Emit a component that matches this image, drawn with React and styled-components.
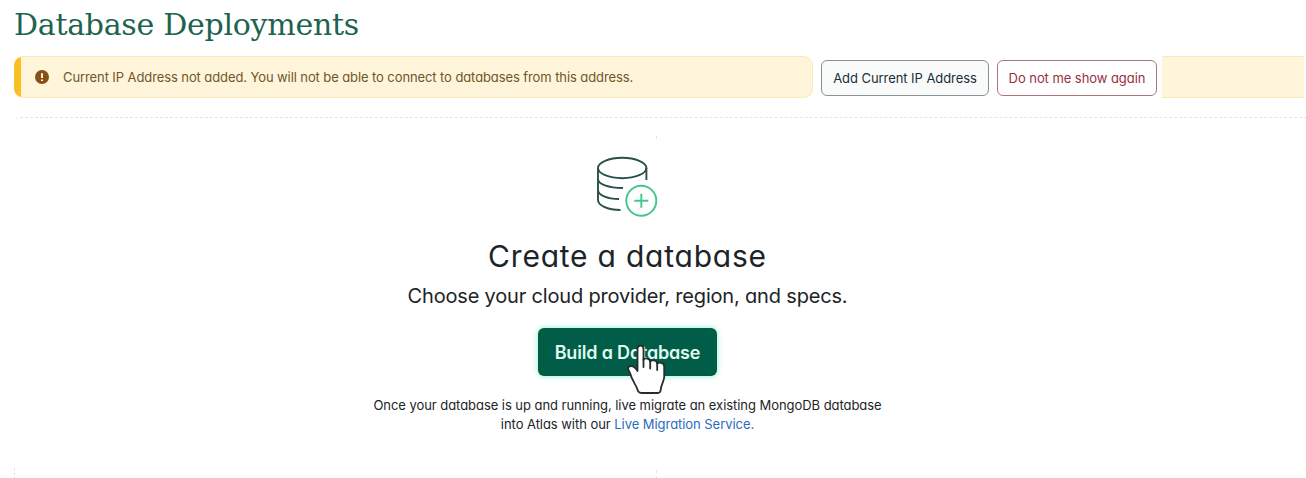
import React from "react";
import styled, { createGlobalStyle } from "styled-components";

const GlobalStyle = createGlobalStyle`
  body {
    margin: 0;
    background: #fff;
    overflow: hidden;
    font-family: Inter, "Liberation Sans", sans-serif;
    font-feature-settings: "cv11";
  }
`;

const Page = styled.main`
  display: flex;
  flex-direction: column;
  width: 1292px;
  height: 478px;
  padding-left: 14px;
  overflow: hidden;
`;

const Title = styled.h1`
  margin: 0;
  height: 56px;
  font: 400 30px/49px "DejaVu Serif", serif;
  letter-spacing: -0.27px;
  color: #1d6350;
  white-space: nowrap;
`;

const BannerRow = styled.div`
  display: flex;
  align-items: center;
  gap: 8px;
  height: 42px;
  padding-right: 2px;
`;

const Banner = styled.div`
  box-sizing: border-box;
  display: flex;
  align-items: center;
  width: 799px;
  height: 42px;
  padding-left: 20px;
  gap: 13px;
  border: 1px solid #faeab9;
  border-left: 0;
  border-radius: 9px;
  background: linear-gradient(to right, #fabf22 7px, #fef5da 7px);
  color: #71562a;
  font-size: 13px;
  letter-spacing: -0.095px;
  white-space: nowrap;
`;

const BannerTail = styled.div`
  box-sizing: border-box;
  flex: 1;
  height: 42px;
  margin-left: -3px;
  border: solid #faeab9;
  border-width: 1px 0;
  background: #fef5da;
`;

const OutlineButton = styled.button`
  box-sizing: border-box;
  width: ${p => p.$width}px;
  height: 36px;
  margin: 2px 0 0;
  padding: 0;
  border: 1px solid ${p => p.$border};
  border-radius: 6px;
  background: ${p => p.$background};
  color: ${p => p.$color};
  font: inherit;
  font-size: 13px;
  font-feature-settings: inherit;
  letter-spacing: -0.06px;
  white-space: nowrap;
`;

const Card = styled.section`
  box-sizing: border-box;
  display: flex;
  flex-direction: column;
  align-items: center;
  position: relative;
  flex: 1;
  margin-top: 19px;
  padding: 36px 65px 0 0;
  border-top: 1px dashed #e3e5e4;
  border-top-left-radius: 6px;
  color: #1c2427;
  text-align: center;
  white-space: nowrap;
`;

const GuideLine = styled.i`
  position: absolute;
  left: ${p => p.$left}px;
  top: ${p => p.$top}px;
  height: ${p => p.$height}px;
  border-left: 1px dashed #e3e5e4;
`;

const DatabaseIcon = styled.svg`
  display: block;
  width: 66px;
  height: 66px;
  margin-right: 1px;
  fill: none;
  stroke-width: 1.9;
`;

const Heading = styled.h2`
  margin: 17px 0 0;
  font-size: 30px;
  font-weight: 400;
  line-height: 38px;
  letter-spacing: 0.78px;
`;

const Subheading = styled.p`
  margin: 7px 0 0;
  font-size: 20px;
  line-height: 28px;
  letter-spacing: -0.18px;
`;

const PrimaryButton = styled.button`
  width: 179px;
  height: 48px;
  margin-top: 18px;
  padding: 0;
  border: 0;
  border-radius: 6px;
  background: #025d48;
  box-shadow: 0 0 5px 1px #a9f3d6;
  color: #dffaee;
  font: inherit;
  font-size: 18px;
  font-weight: 600;
  font-feature-settings: inherit;
  letter-spacing: -0.18px;
`;

const Note = styled.p`
  margin: 20px 0 0;
  font-size: 13px;
  line-height: 19px;
  letter-spacing: -0.05px;
`;

const Link = styled.a`
  color: #2a6cc0;
`;

const Pointer = styled.svg`
  position: absolute;
  left: 612px;
  top: 226px;
  width: 42px;
  height: 52px;
`;

export default function App() {
  return (
    <>
      <GlobalStyle />
      <Page>
        <Title>Database Deployments</Title>
        <BannerRow>
          <Banner>
            <svg width="16" height="16" viewBox="0 0 16 16">
              <circle cx="8" cy="8" r="7" fill="#87501b" />
              <path d="M8 4.3v4.6M8 10.4v1.6" stroke="#fef5da" strokeWidth="2" />
            </svg>
            Current IP Address not added. You will not be able to connect to databases from this address.
          </Banner>
          <OutlineButton $width={168} $border="#889397" $background="#f9fbfa" $color="#1c2d38">
            Add Current IP Address
          </OutlineButton>
          <OutlineButton $width={160} $border="#b0747d" $background="#fff" $color="#97303f">
            Do not me show again
          </OutlineButton>
          <BannerTail />
        </BannerRow>
        <Card>
          <GuideLine $left={642} $top={18} $height={3} />
          <GuideLine $left={0} $top={350} $height={12} />
          <GuideLine $left={642} $top={352} $height={9} />
          <DatabaseIcon viewBox="0 0 66 66">
            <g stroke="#27514a">
              <ellipse cx="28.2" cy="14" rx="24.2" ry="10.2" />
              <path d="M4 14V46C4 51 13 56 26.500 56M52.400 14V26M4 25C4 30 14 34 29 34M4 36C4 41 13 45 25 45" />
            </g>
            <g stroke="#42c78b">
              <circle cx="47.3" cy="46.7" r="15" />
              <path d="M47.300 39.700v14M40.300 46.700h14" />
            </g>
          </DatabaseIcon>
          <Heading>Create a database</Heading>
          <Subheading>Choose your cloud provider, region, and specs.</Subheading>
          <PrimaryButton>Build a Database</PrimaryButton>
          <Note>
            Once your database is up and running, live migrate an existing MongoDB database
            <br />
            into Atlas with our <Link>Live Migration Service.</Link>
          </Note>
          <Pointer viewBox="0 0 42 52">
            <path
              d="M11.500 5C11.500 .6 17.500 .6 17.500 5V16C18.500 13.500 24 14 24.200 17.500C25.500 15.500 31 16 31.200 19.500C33 17.800 38 18.500 38.200 22.500V33C38.200 37 35 40 34.500 47Q34 49 32 49H15.500Q13 49 12 47C10 40 6 37 4 29C3 26.500 1 25 2.500 23C5 20.500 9 23 11.500 27Z"
              fill="#fff" stroke="#272d2d" strokeWidth="1.8" strokeLinejoin="round"
            />
            <path d="M17.500 15V23M24.200 17V24.500M31.200 19V26" stroke="#272d2d" strokeWidth="1.8" strokeLinecap="round" />
          </Pointer>
        </Card>
      </Page>
    </>
  );
}
